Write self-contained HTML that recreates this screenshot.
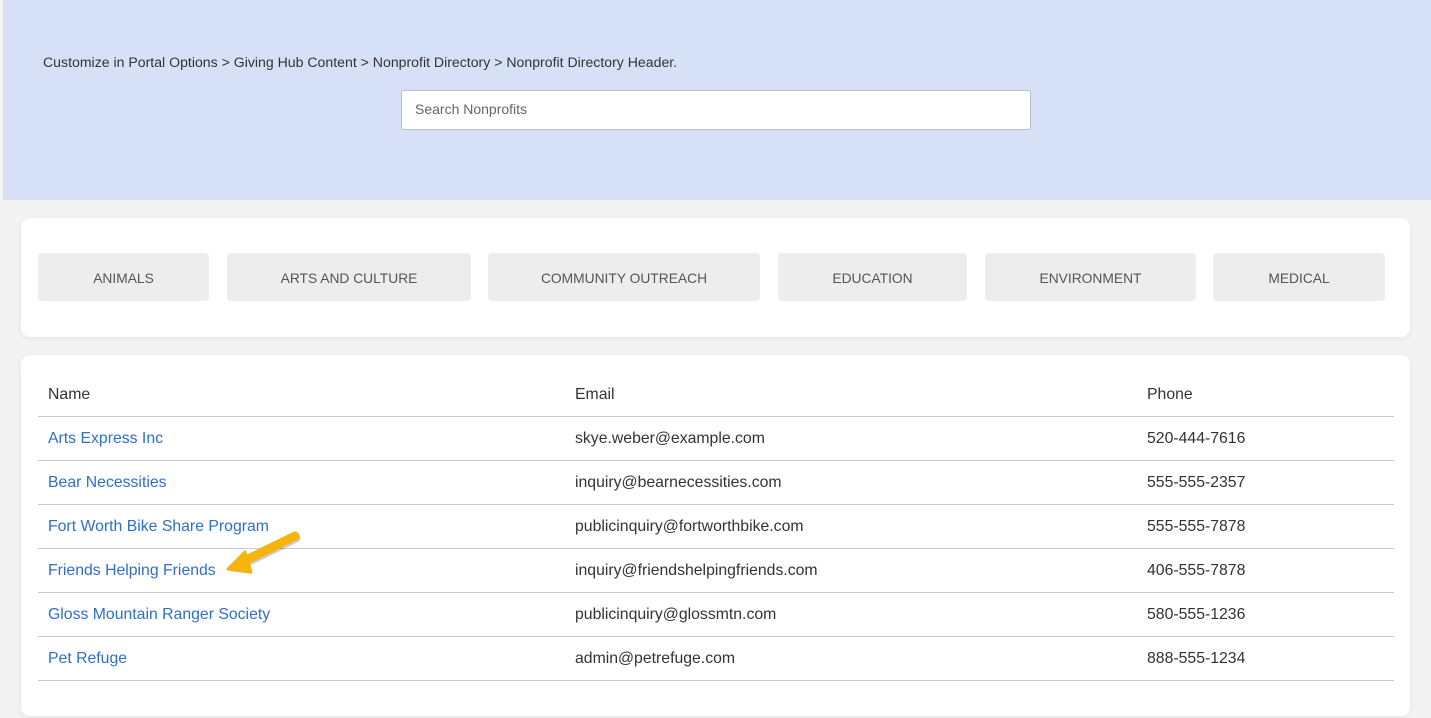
<!DOCTYPE html>
<html><head><style>
body{margin:0;width:1431px;height:718px;background:#f3f3f3;font-family:"Liberation Sans",sans-serif;position:relative;overflow:hidden}
.hdr{position:absolute;left:3px;top:0;width:1428px;height:200px;background:#d6e1f7}
.crumb{position:absolute;left:43px;top:54px;font-size:14.1px;color:#333}
.search{position:absolute;left:401px;top:90px;width:630px;height:40px;background:#fff;border:1px solid #b9bec7;border-radius:3px;box-sizing:border-box;font-size:14px;color:#666;padding:10px 13px}
.card{position:absolute;left:21px;width:1389px;background:#fff;border-radius:9px;box-shadow:0 2px 8px rgba(0,0,0,.06)}
.btn{position:absolute;top:35px;height:48px;background:#ededed;border-radius:4px;font-size:13.8px;color:#555;display:flex;align-items:center;justify-content:center;padding-top:2px;box-sizing:border-box}
.row{position:absolute;left:17px;width:1356px;border-bottom:1px solid #c8c8c8;height:43px;font-size:15.8px;color:#333}
.row span{position:absolute;top:13px}
.a{color:#2e6fcb}
</style></head><body>
<div class="hdr"></div>
<div class="crumb">Customize in Portal Options &gt; Giving Hub Content &gt; Nonprofit Directory &gt; Nonprofit Directory Header.</div>
<div class="search">Search Nonprofits</div>
<div class="card" style="top:218px;height:119px">
<div class="btn" style="left:17px;width:171px">ANIMALS</div>
<div class="btn" style="left:206px;width:244px">ARTS AND CULTURE</div>
<div class="btn" style="left:467px;width:272px">COMMUNITY OUTREACH</div>
<div class="btn" style="left:757px;width:189px">EDUCATION</div>
<div class="btn" style="left:964px;width:211px">ENVIRONMENT</div>
<div class="btn" style="left:1192px;width:172px">MEDICAL</div>
</div>
<div class="card" style="top:355px;height:361px">
<div class="row" style="top:18px"><span style="left:10px;top:13px">Name</span><span style="left:537px">Email</span><span style="left:1109px">Phone</span></div>
<div class="row" style="top:62px"><span class="a" style="left:10px">Arts Express Inc</span><span style="left:537px">skye.weber@example.com</span><span style="left:1109px">520-444-7616</span></div>
<div class="row" style="top:106px"><span class="a" style="left:10px">Bear Necessities</span><span style="left:537px">inquiry@bearnecessities.com</span><span style="left:1109px">555-555-2357</span></div>
<div class="row" style="top:150px"><span class="a" style="left:10px">Fort Worth Bike Share Program</span><span style="left:537px">publicinquiry@fortworthbike.com</span><span style="left:1109px">555-555-7878</span></div>
<div class="row" style="top:194px"><span class="a" style="left:10px">Friends Helping Friends</span><span style="left:537px">inquiry@friendshelpingfriends.com</span><span style="left:1109px">406-555-7878</span></div>
<div class="row" style="top:238px"><span class="a" style="left:10px">Gloss Mountain Ranger Society</span><span style="left:537px">publicinquiry@glossmtn.com</span><span style="left:1109px">580-555-1236</span></div>
<div class="row" style="top:282px"><span class="a" style="left:10px">Pet Refuge</span><span style="left:537px">admin@petrefuge.com</span><span style="left:1109px">888-555-1234</span></div>
</div>
<svg style="position:absolute;left:0;top:0" width="1431" height="718">
<g stroke-linecap="round" stroke-linejoin="round">
<path d="M295 536 L244 561" stroke="rgba(0,0,0,.2)" stroke-width="9" fill="none" transform="translate(1,2)"/>
<path d="M228 569 L245 552 L251 572 Z" fill="rgba(0,0,0,.2)" transform="translate(1,2)"/>
<path d="M295 536 L244 561" stroke="#f6b40c" stroke-width="9" fill="none"/>
<path d="M228 569 L245 552 L251 572 Z" fill="#f6b40c" stroke="#f6b40c" stroke-width="3"/>
</g>
</svg>
</body></html>
